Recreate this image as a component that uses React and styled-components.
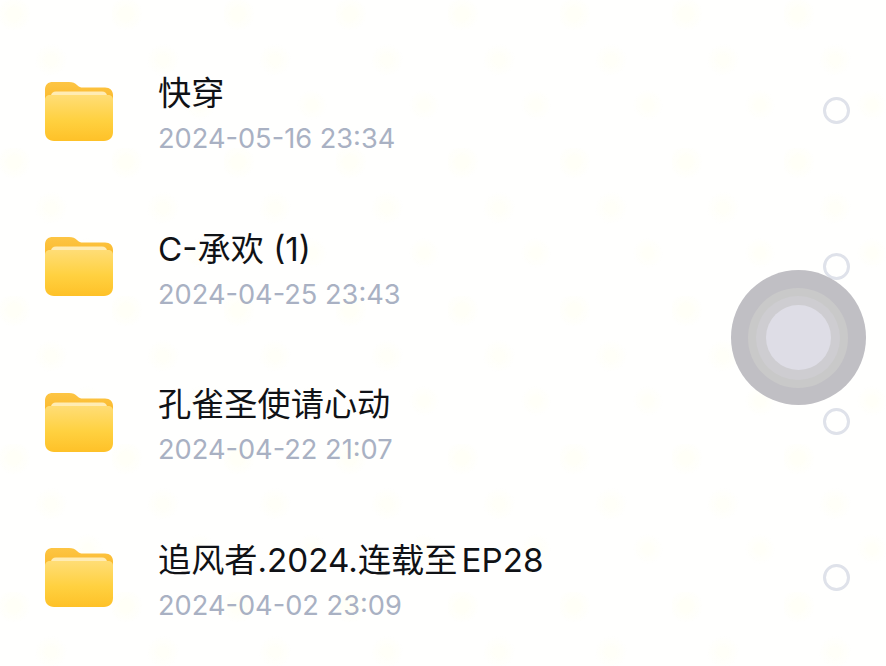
import React from "react";
import styled, { createGlobalStyle } from "styled-components";

const Global = createGlobalStyle`
  html, body { margin: 0; padding: 0; background: #fffffd; }
  * { box-sizing: border-box; }
`;

const Page = styled.div`
  position: relative;
  width: 886px;
  height: 666px;
  overflow: hidden;
  padding: 33px 36px 0 45px;
  background-color: #fffffe;
  background-image:
    radial-gradient(circle at 14px 14px, #fffff7 0 6px, rgba(255, 255, 247, 0) 17px),
    radial-gradient(circle at 51px 60px, #fffff8 0 5px, rgba(255, 255, 248, 0) 16px),
    radial-gradient(circle at 88px 105px, #fffff8 0 5px, rgba(255, 255, 248, 0) 15px);
  background-size: 112px 148px;
  font-family: "Inter", "Noto Sans CJK SC", sans-serif;
`;

const List = styled.ul`
  list-style: none;
  margin: 0;
  padding: 0;
`;

const Row = styled.li`
  display: flex;
  align-items: center;
  height: 155.5px;
`;

const FolderIcon = styled.svg`
  flex: none;
  width: 68px;
  height: 60px;
  margin-right: 45px;
`;

const Info = styled.div`
  flex: 1;
  min-width: 0;
  display: flex;
  flex-direction: column;
  gap: 9px;
  padding-top: 6px;
`;

const Title = styled.div`
  color: #101216;
  font-size: 33.2px;
  line-height: 42px;
  font-weight: 400;
  white-space: nowrap;
  text-autospace: normal;
`;

const DateText = styled.div`
  color: #a9b1c3;
  font-size: 27.2px;
  line-height: 32px;
  white-space: nowrap;
`;

const Radio = styled.span`
  flex: none;
  width: 27px;
  height: 27px;
  border-radius: 50%;
  border: 3px solid #dfe2ea;
`;

const Floating = styled.div`
  position: absolute;
  left: 730.5px;
  top: 270px;
  width: 135px;
  height: 135px;
  border-radius: 50%;
  background: #c0bfc4;
  display: grid;
  place-items: center;
`;

const Halo = styled.div`
  width: ${(p) => p.$size}px;
  height: ${(p) => p.$size}px;
  border-radius: 50%;
  background: ${(p) => p.$color};
  display: grid;
  place-items: center;
`;

const Folder = () => (
  <FolderIcon viewBox="0 0 68 60" aria-hidden="true">
    <defs>
      <linearGradient id="fBack" x1="0" y1="0" x2="0" y2="1">
        <stop offset="0" stopColor="#fdc544" />
        <stop offset="1" stopColor="#f9b31f" />
      </linearGradient>
      <linearGradient id="fFront" x1="0" y1="0" x2="0" y2="1">
        <stop offset="0" stopColor="#ffdd76" />
        <stop offset="0.55" stopColor="#ffd140" />
        <stop offset="1" stopColor="#fec128" />
      </linearGradient>
    </defs>
    <path
      d="M0 9C0 3.500 3 1 8 1H24C28 1 30 2 32 4C34 6 35.500 6.500 38 6.500H60C65 6.500 68 9.500 68 14V30H0Z"
      fill="url(#fBack)"
    />
    <path d="M6 15C6 12 8 10.500 11 10.500H57C60 10.500 62 12 62 15V20H6Z" fill="#ffecb4" />
    <path
      d="M0 19C0 15.500 2 14 5 14H63C66 14 68 15.500 68 19V51C68 56.500 64.500 60 59 60H9C3.500 60 0 56.500 0 51Z"
      fill="url(#fFront)"
    />
  </FolderIcon>
);

const items = [
  ["快穿", "2024-05-16 23:34"],
  ["C-承欢 (1)", "2024-04-25 23:43"],
  ["孔雀圣使请心动", "2024-04-22 21:07"],
  ["追风者.2024.连载至EP28", "2024-04-02 23:09"],
];

export default function App() {
  return (
    <Page>
      <Global />
      <List>
        {items.map(([name, date]) => (
          <Row key={name}>
            <Folder />
            <Info>
              <Title>{name}</Title>
              <DateText>{date}</DateText>
            </Info>
            <Radio />
          </Row>
        ))}
      </List>
      <Floating>
        <Halo $size={100} $color="#c9c9c9">
          <Halo $size={84} $color="#cecdd1">
            <Halo $size={65} $color="#dedde6" />
          </Halo>
        </Halo>
      </Floating>
    </Page>
  );
}
